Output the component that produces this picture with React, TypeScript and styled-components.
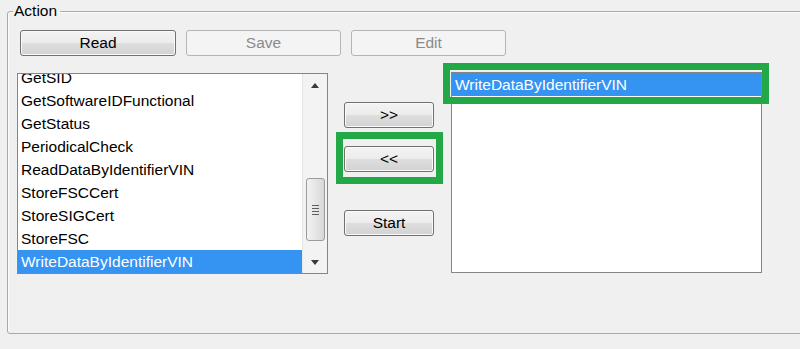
import { FC } from 'react'
import styled, { createGlobalStyle } from 'styled-components'

const GlobalStyle = createGlobalStyle`
  html, body {
    margin: 0;
    padding: 0;
    background: #f0f0f0;
    overflow: hidden;
  }
  body {
    font-family: "Liberation Sans", Arial, sans-serif;
    color: #000;
  }
`

const Page = styled.div`
  width: 800px;
  height: 349px;
  padding: 3px 0 0 7px;
  box-sizing: border-box;
`

const Group = styled.fieldset`
  margin: 0;
  width: 830px;
  height: 331px;
  box-sizing: border-box;
  border: 1px solid #a9a9a9;
  border-radius: 3px;
  padding: 11px 0 0 9px;
  box-shadow: inset 1px 1px 0 #fbfbfb;
`

const Legend = styled.legend`
  font-size: 15.5px;
  padding: 0 3px 0 1px;
  margin-left: -4px;
  line-height: 16px;
`

const Toolbar = styled.div`
  display: flex;
  gap: 10px;
  margin-left: 3px;
`

const Button = styled.button<{ $w?: number }>`
  width: ${p => p.$w ?? 90}px;
  height: 26px;
  box-sizing: border-box;
  border: 1px solid #707070;
  border-radius: 3px;
  background: linear-gradient(#f3f3f3 0%, #ececec 48%, #dedede 52%, #d2d2d2 100%);
  box-shadow: inset 0 0 0 1px #fafafa;
  font-family: "Liberation Sans", Arial, sans-serif;
  font-size: 15.5px;
  color: #000;
  padding: 0;

  &:disabled {
    border-color: #b2b6b8;
    background: #f4f4f4;
    box-shadow: none;
    color: #8a8a8a;
  }
`

const Body = styled.div`
  display: flex;
  align-items: flex-start;
  margin-top: 16px;
`

const ListBox = styled.div<{ $top?: number }>`
  position: relative;
  width: 311px;
  height: 201px;
  margin-top: ${p => p.$top ?? 0}px;
  box-sizing: border-box;
  border: 1px solid #858585;
  background: #fff;
  display: flex;
`

const Items = styled.div<{ $offset?: number }>`
  flex: 1;
  overflow: ${p => (p.$offset ? 'hidden' : 'visible')};

  & > :first-child {
    margin-top: ${p => -(p.$offset ?? 0)}px;
  }
`

const Item = styled.div<{ $selected?: boolean }>`
  position: relative;
  height: 23px;
  line-height: 23px;
  padding-left: 3px;
  font-size: 15.5px;
  white-space: nowrap;
  background: ${p => (p.$selected ? '#3593f2' : 'transparent')};
  color: ${p => (p.$selected ? '#fff' : '#000')};
`

const Scrollbar = styled.div`
  width: 24px;
  display: flex;
  flex-direction: column;
  background: #f3f3f3;
  border-left: 1px solid #e6e6e6;
`

const ArrowBtn = styled.div`
  height: 22px;
  display: flex;
  align-items: center;
  justify-content: center;
`

const Track = styled.div`
  flex: 1;
  display: flex;
  flex-direction: column;
  align-items: center;
`

const Thumb = styled.div`
  margin-top: 82px;
  width: 19px;
  height: 63px;
  box-sizing: border-box;
  border: 1px solid #9b9b9b;
  border-radius: 3px;
  background: linear-gradient(90deg, #f2f2f2, #e3e3e3 60%, #d6d6d6);
  display: flex;
  flex-direction: column;
  align-items: center;
  justify-content: center;
  gap: 2px;
`

const Grip = styled.span`
  width: 7px;
  height: 1px;
  background: #5e5e5e;
`

const Middle = styled.div`
  display: flex;
  flex-direction: column;
  width: 90px;
  margin: 30px 17px 0 16px;
`

const Slot = styled.div<{ $gap: number }>`
  position: relative;
  margin-bottom: ${p => p.$gap}px;
`

const Highlight = styled.span<{ $t: number; $r: number; $b: number; $l: number }>`
  position: absolute;
  top: ${p => -p.$t}px;
  right: ${p => -p.$r}px;
  bottom: ${p => -p.$b}px;
  left: ${p => -p.$l}px;
  border: 7px solid #22a847;
  pointer-events: none;
`

const Arrow: FC<{ up?: boolean }> = ({ up }) => (
  <svg width="8" height="5" viewBox="0 0 8 5">
    <path d={up ? 'M0 5 L4 0 L8 5 Z' : 'M0 0 L8 0 L4 5 Z'} fill="#3a3a3a" />
  </svg>
)

const leftItems = [
  'GetSID',
  'GetSoftwareIDFunctional',
  'GetStatus',
  'PeriodicalCheck',
  'ReadDataByIdentifierVIN',
  'StoreFSCCert',
  'StoreSIGCert',
  'StoreFSC',
  'WriteDataByIdentifierVIN',
]

const App: FC = () => (
  <Page>
    <GlobalStyle />
    <Group>
      <Legend>Action</Legend>
      <Toolbar>
        <Button $w={156}>Read</Button>
        <Button $w={155} disabled>Save</Button>
        <Button $w={155} disabled>Edit</Button>
      </Toolbar>

      <Body>
        <ListBox $top={1}>
          <Items $offset={8}>
            {leftItems.map((name, i) => (
              <Item key={name} $selected={i === leftItems.length - 1}>{name}</Item>
            ))}
          </Items>
          <Scrollbar>
            <ArrowBtn><Arrow up /></ArrowBtn>
            <Track>
              <Thumb>
                <Grip />
                <Grip />
                <Grip />
                <Grip />
              </Thumb>
            </Track>
            <ArrowBtn><Arrow /></ArrowBtn>
          </Scrollbar>
        </ListBox>

        <Middle>
          <Slot $gap={18}>
            <Button>&gt;&gt;</Button>
          </Slot>
          <Slot $gap={38}>
            <Button>&lt;&lt;</Button>
            <Highlight $t={14} $r={9} $b={12} $l={8} />
          </Slot>
          <Slot $gap={0}>
            <Button>Start</Button>
          </Slot>
        </Middle>

        <ListBox $top={0}>
          <Items>
            <Item $selected>
              WriteDataByIdentifierVIN
              <Highlight $t={10} $r={8} $b={8} $l={9} />
            </Item>
          </Items>
        </ListBox>
      </Body>
    </Group>
  </Page>
)

export default App
